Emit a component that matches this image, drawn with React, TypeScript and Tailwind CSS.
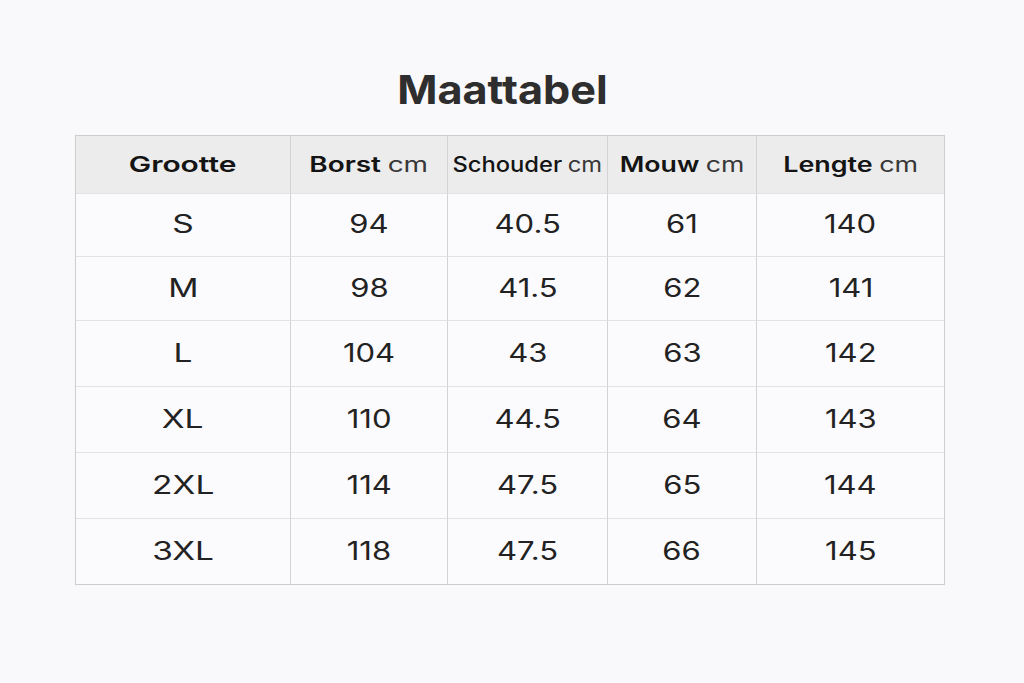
const ROWS: [string, string, string, string, string][] = [
  ["S", "94", "40.5", "61", "140"],
  ["M", "98", "41.5", "62", "141"],
  ["L", "104", "43", "63", "142"],
  ["XL", "110", "44.5", "64", "143"],
  ["2XL", "114", "47.5", "65", "144"],
  ["3XL", "118", "47.5", "66", "145"],
];

const ROW_H = ["h-[63px]", "h-[64px]", "h-[66px]", "h-[66px]", "h-[66px]", "h-[66px]"];

const HEADERS: { label: string; cls: string; scale: string }[] = [
  { label: "Borst", cls: "font-semibold", scale: "scale-x-[1.33]" },
  { label: "Schouder", cls: "font-medium", scale: "scale-x-[1.13]" },
  { label: "Mouw", cls: "font-semibold", scale: "scale-x-[1.27]" },
  { label: "Lengte", cls: "font-semibold", scale: "scale-x-[1.28]" },
];

export default function App() {
  return (
    <div
      className="w-[1024px] h-[683px] bg-[#f9f8fa] flex flex-col text-[#1f1f1f]"
      style={{ fontFamily: "Inter, 'Noto Sans', sans-serif" }}
    >
      <h1 className="mt-[64px] ml-[-19px] h-[52px] text-center text-[40px] font-bold leading-[52px] text-[#2e2e2e]">
        <span className="inline-block scale-x-[1.08]">Maattabel</span>
      </h1>
      <div className="mt-[19px] ml-[75px] w-[870px] border border-[#cdcdcd] grid grid-cols-[215px_157px_160px_149px_187px]">
        <div className="h-[57px] bg-[#ececec] flex items-center justify-center border-r border-[#d3d3d3] text-[#141414]">
          <span className="inline-block scale-x-[1.36] text-[22px] font-semibold">Grootte</span>
        </div>
        {HEADERS.map((h, i) => (
          <div
            key={h.label}
            className={`h-[57px] bg-[#ececec] flex items-center justify-center text-[#141414] ${
              i < 3 ? "border-r border-[#d3d3d3]" : ""
            }`}
          >
            <span className={`inline-block text-[21px] ${h.scale}`}>
              <span className={h.cls}>{h.label}</span>
              <span className="ml-[5px] font-normal text-[#383838]">cm</span>
            </span>
          </div>
        ))}
        {ROWS.map((row, r) =>
          row.map((cell, c) => (
            <div
              key={`${r}-${c}`}
              className={`${ROW_H[r]} flex items-center justify-center bg-[#fbfafc] border-t border-[#e3e3e3] text-[#222] ${
                c < 4 ? "border-r border-r-[#d3d3d3]" : ""
              }`}
            >
              <span
                className={
                  c === 0
                    ? "inline-block text-[25px] scale-x-[1.34]"
                    : "inline-block text-[25px] scale-x-[1.24]"
                }
              >
                {cell}
              </span>
            </div>
          ))
        )}
      </div>
    </div>
  );
}
